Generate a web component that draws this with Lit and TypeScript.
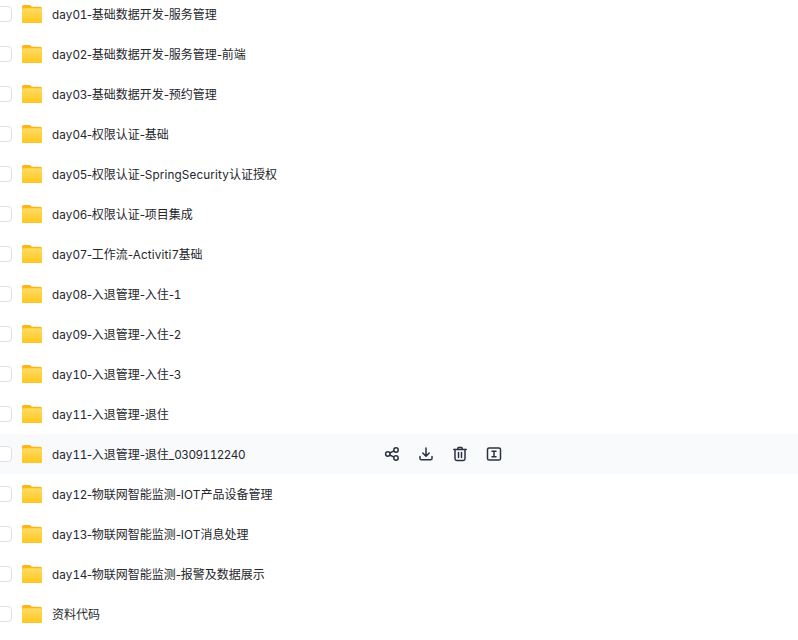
import { LitElement, html, css, svg } from "lit";
import { customElement } from "lit/decorators.js";

const NAMES = [
  "day01-基础数据开发-服务管理",
  "day02-基础数据开发-服务管理-前端",
  "day03-基础数据开发-预约管理",
  "day04-权限认证-基础",
  "day05-权限认证-SpringSecurity认证授权",
  "day06-权限认证-项目集成",
  "day07-工作流-Activiti7基础",
  "day08-入退管理-入住-1",
  "day09-入退管理-入住-2",
  "day10-入退管理-入住-3",
  "day11-入退管理-退住",
  "day11-入退管理-退住_0309112240",
  "day12-物联网智能监测-IOT产品设备管理",
  "day13-物联网智能监测-IOT消息处理",
  "day14-物联网智能监测-报警及数据展示",
  "资料代码",
];
const ACTIVE = 11;

const runs = (s: string) =>
  s.split(/([0-9]+|-|[A-Za-z_]+)/).filter(Boolean).map((p) => {
    if (/^[0-9]/.test(p)) return html`<span class="lat num">${p}</span>`;
    if (p === "-") return html`<span class="lat dash">${p}</span>`;
    if (/^[A-Za-z_]/.test(p)) return html`<span class="lat">${p}</span>`;
    return p;
  });

const folder = svg`<svg class="folder" width="20" height="18" viewBox="0 0 20 18">
  <defs><linearGradient id="fg" x1="0" y1="0" x2="0" y2="1">
    <stop offset="0" stop-color="#ffdc63"/><stop offset="1" stop-color="#ffc61f"/>
  </linearGradient></defs>
  <path d="M1.8 0h5.6c.8 0 1.2.3 1.7.9l.8.9h8.3a1.8 1.8 0 0 1 1.8 1.8v12.6a1.8 1.8 0 0 1-1.8 1.8H1.8A1.8 1.8 0 0 1 0 16.2V1.8A1.8 1.8 0 0 1 1.8 0z" fill="#ffb518"/>
  <path d="M1.5 3.3h17c.8 0 1.5.7 1.5 1.5v11.4a1.8 1.8 0 0 1-1.8 1.8H1.8A1.8 1.8 0 0 1 0 16.2V4.8c0-.8.7-1.5 1.5-1.5z" fill="url(#fg)"/>
</svg>`;

const actions = html`<div class="actions">
  <svg width="16" height="16" viewBox="0 0 16 16" fill="none" stroke="#2b3340" stroke-width="1.5">
    <circle cx="3.8" cy="8" r="2.2"/><circle cx="12" cy="4" r="2.2"/><circle cx="12" cy="12" r="2.2"/>
    <path d="M5.8 7l4.2-2.1M5.8 9l4.2 2.1"/>
  </svg>
  <svg width="16" height="16" viewBox="0 0 16 16" fill="none" stroke="#2b3340" stroke-width="1.5" stroke-linecap="round" stroke-linejoin="round">
    <path d="M8 2v8M4.8 7L8 10.2 11.2 7"/><path d="M2 10.5v2c0 .8.6 1.3 1.3 1.3h9.4c.7 0 1.3-.5 1.3-1.3v-2"/>
  </svg>
  <svg width="16" height="16" viewBox="0 0 16 16" fill="none" stroke="#2b3340" stroke-width="1.5" stroke-linecap="round" stroke-linejoin="round">
    <path d="M1.8 3.4h12.4M5.6 3.2l.6-1.7h3.6l.6 1.7"/><path d="M3 3.6v9.2c0 1 .7 1.7 1.7 1.7h6.6c1 0 1.7-.7 1.7-1.7V3.6"/><path d="M6.5 6.6v4.8M9.5 6.6v4.8"/>
  </svg>
  <svg width="16" height="16" viewBox="0 0 16 16" fill="none" stroke="#2b3340" stroke-width="1.5" stroke-linecap="round">
    <rect x="1.5" y="2" width="13" height="12" rx="1.6"/>
    <path d="M6 5.2h4M6 10.8h4M8 5.2v5.6"/>
  </svg>
</div>`;

@customElement("app-root")
export class AppRoot extends LitElement {
  static styles = css`
    :host { display: block; height: 640px; overflow: hidden; background: #fff; }
    .list { margin-top: -6px; }
    .row {
      display: flex; align-items: center; height: 40px;
      font: 12px/20px "Noto Sans CJK SC", sans-serif; color: #25262b;
    }
    .row.active { background: #f9fafc; }
    .check {
      flex: none; box-sizing: border-box; width: 16px; height: 16px; margin-left: -4px;
      border: 1.5px solid #dfe0e4; border-radius: 4px; background: #fff;
    }
    .folder { flex: none; margin-left: 10px; }
    .name { flex: none; width: 332px; margin-left: 10px; white-space: nowrap; }
    .lat { font-family: Inter, sans-serif; font-size: 11.7px; letter-spacing: 0.15px; }
    .num { font-feature-settings: "tnum"; letter-spacing: -0.5px; }
    .dash { letter-spacing: -0.4px; }
    .actions { display: flex; gap: 18px; color: #2b3340; }
    .actions svg { display: block; }
  `;

  render() {
    return html`<div class="list">
      ${NAMES.map((n, i) => html`<div class="row ${i === ACTIVE ? "active" : ""}">
        <span class="check"></span>${folder}
        <span class="name">${runs(n)}</span>
        ${i === ACTIVE ? actions : ""}
      </div>`)}
    </div>`;
  }
}
